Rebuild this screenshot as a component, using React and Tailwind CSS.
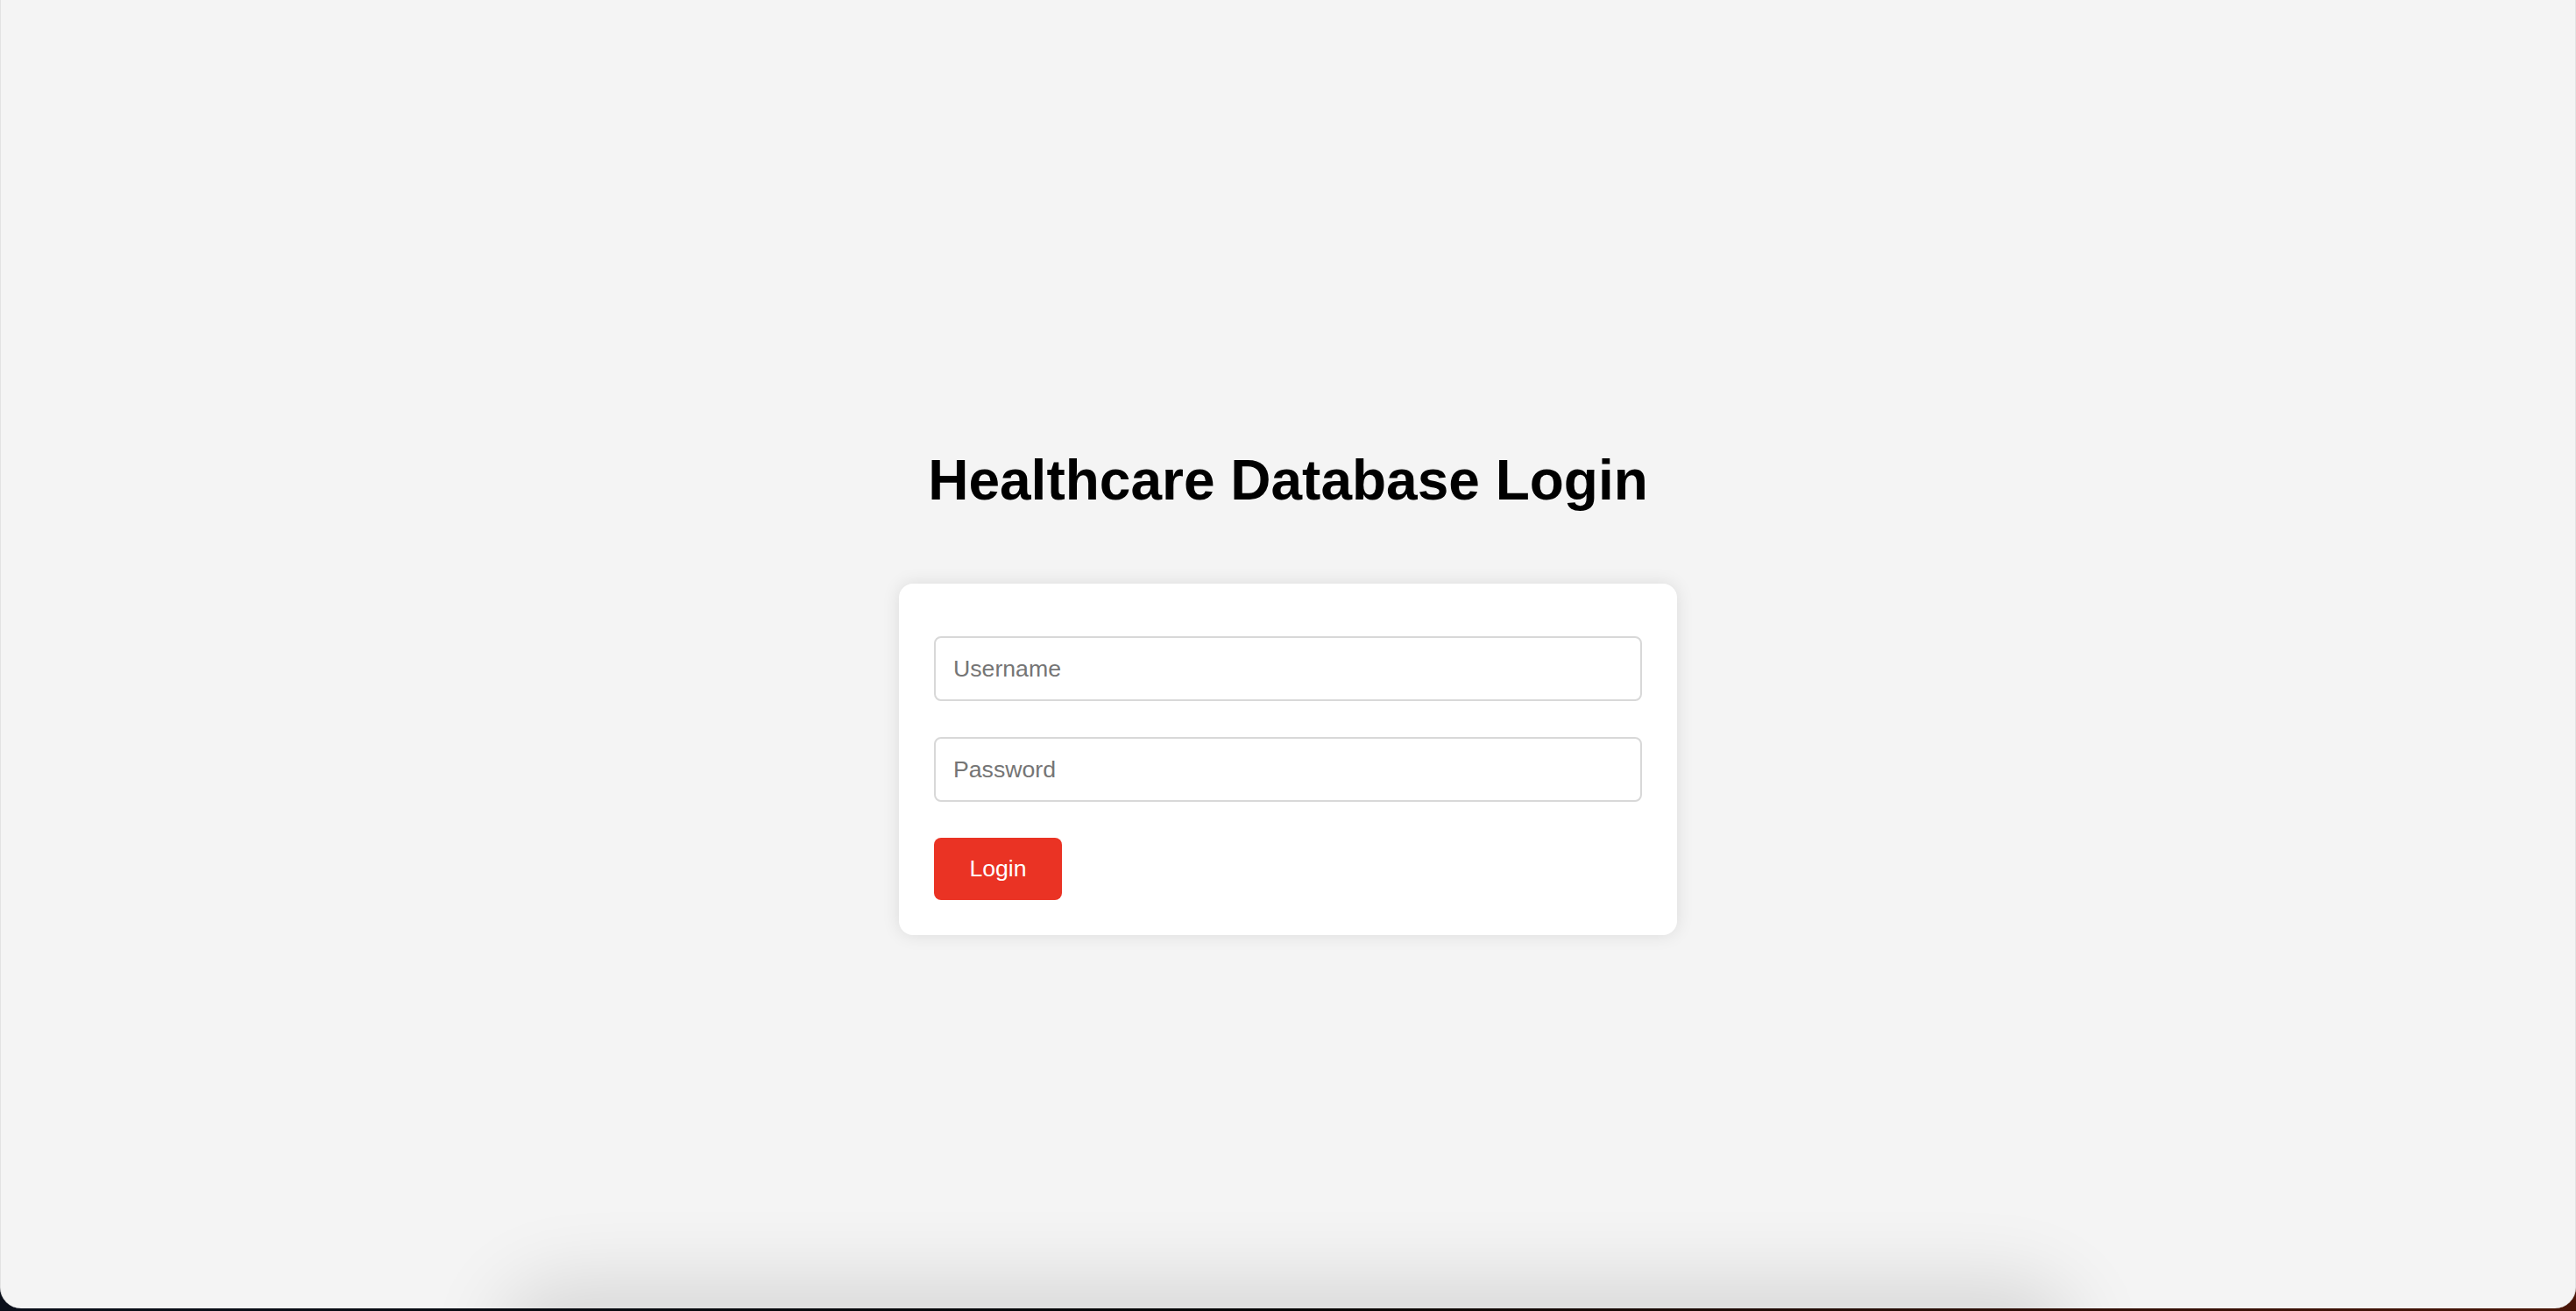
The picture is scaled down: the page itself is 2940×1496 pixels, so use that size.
export default function App() {
  return (
    <div className="w-full h-[1496px] bg-[linear-gradient(to_right,#0a0f1a,#050505_50%,#4a1608)] overflow-hidden">
      <div className="relative h-[1493px] w-full rounded-b-[24px] bg-[#f4f4f4] border-x border-[#e2e2e2] overflow-hidden font-['Liberation_Sans',Arial,sans-serif]">
        <div className="flex flex-col items-center pt-[511px]">
          <h1 className="text-[64px] leading-[74px] font-bold text-black">Healthcare Database Login</h1>
          <div className="mt-[81px] w-[888px] bg-white rounded-[16px] shadow-[0_0_20px_rgba(0,0,0,0.1)] pt-[60px] px-[40px] pb-[40px] flex flex-col gap-[41px]">
            <input
              type="text"
              placeholder="Username"
              className="w-full h-[74px] border-2 border-[#d8d8d8] rounded-[8px] px-[20px] text-[26.67px] text-black placeholder:text-[#757575] outline-none bg-white"
            />
            <input
              type="password"
              placeholder="Password"
              className="w-full h-[74px] border-2 border-[#d8d8d8] rounded-[8px] px-[20px] text-[26.67px] text-black placeholder:text-[#757575] outline-none bg-white"
            />
            <button className="self-start w-[146px] h-[71px] rounded-[8px] bg-[#ea3324] text-white text-[26.67px] leading-none">
              Login
            </button>
          </div>
        </div>
        <div className="absolute left-[600px] right-[600px] top-[1493px] h-[80px] rounded-full shadow-[0_0_90px_30px_rgba(0,0,0,0.12)] pointer-events-none"></div>
      </div>
    </div>
  );
}
